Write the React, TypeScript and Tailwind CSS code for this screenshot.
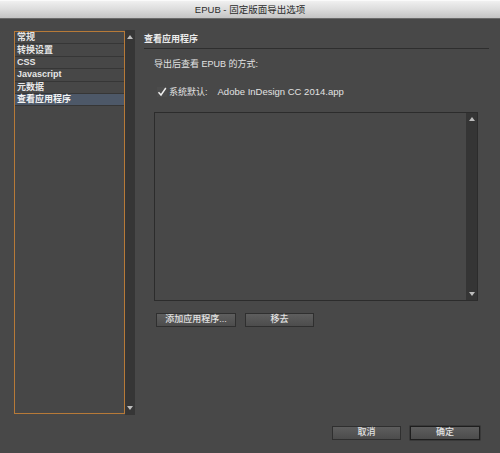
import React from "react";

const font = { fontFamily: '"Liberation Sans", "Noto Sans CJK SC", sans-serif' };

function UpArrow() {
  return (
    <svg width="6" height="4" viewBox="0 0 6 4">
      <path d="M0 4 L3 0 L6 4 Z" fill="#bdbdbd" />
    </svg>
  );
}
function DownArrow() {
  return (
    <svg width="6" height="4" viewBox="0 0 6 4">
      <path d="M0 0 L3 4 L6 0 Z" fill="#bdbdbd" />
    </svg>
  );
}

function Btn({ children, w, def }: { children: React.ReactNode; w: string; def?: boolean }) {
  return (
    <div
      className={`${w} h-[14px] flex items-center justify-center text-[9px] font-medium text-[#e2e2e2] bg-gradient-to-b from-[#5e5e5e] to-[#4c4c4c] ${
        def ? "border border-[#1e1e1e] shadow-[0_0_0_0.5px_#2a2a2a]" : "border border-[#2f2f2f]"
      }`}
    >
      {children}
    </div>
  );
}

const items = ["常规", "转换设置", "CSS", "Javascript", "元数据", "查看应用程序"];

export default function App() {
  return (
    <div className="w-[500px] h-[453px] bg-[#484848] flex flex-col overflow-hidden" style={font}>
      {/* Title bar */}
      <div className="h-[19px] shrink-0 bg-gradient-to-b from-[#f0f0f0] via-[#dcdcdc] to-[#c4c4c4] border-b border-[#6a6a6a] border-t border-t-[#fafafa] flex items-center justify-center">
        <span className="text-[9.5px] text-[#2c2c2c] leading-none">EPUB - 固定版面导出选项</span>
      </div>

      {/* Main */}
      <div className="flex pt-[12px] pl-[14px]">
        {/* Left list */}
        <div className="flex h-[383px]">
          <div className="w-[111px] h-full border border-[#b77a38] bg-[#474747] flex flex-col">
            {items.map((t, i) => (
              <div
                key={t}
                className={`h-[12.4px] shrink-0 border-b border-[#363636] flex items-center pl-[2px] text-[9px] font-semibold leading-none ${
                  i === items.length - 1 ? "bg-[#4d5868] text-[#f2f2f2]" : "text-[#e6e6e6]"
                }`}
              >
                {t}
              </div>
            ))}
          </div>
          <div className="w-[10px] h-[385px] -mt-[1px] bg-[#363636] flex flex-col items-center justify-between py-[5px]">
            <UpArrow />
            <DownArrow />
          </div>
        </div>

        {/* Right panel */}
        <div className="ml-[9px] flex flex-col">
          <div className="w-[345px] h-[18px] border-b border-[#2e2e2e] flex items-center text-[9px] font-semibold text-[#ececec] leading-none pb-[1px]">
            查看应用程序
          </div>
          <div className="pl-[10px] flex flex-col">
            <div className="mt-[11px] text-[9px] text-[#e2e2e2] leading-none">导出后查看 EPUB 的方式:</div>
            <div className="mt-[18px] flex items-center h-[10px] pl-[3px]">
              <svg width="10" height="10" viewBox="0 0 10 10">
                <rect x="0" y="0" width="10" height="10" fill="#4c4c4c" />
                <path d="M1.5 5.2 L4 8 L8.8 1" stroke="#f0f0f0" strokeWidth="1.4" fill="none" />
              </svg>
              <span className="ml-[2px] text-[9px] text-[#e2e2e2] leading-none">系统默认:</span>
              <span className="ml-[10px] text-[9.5px] text-[#e2e2e2] leading-none">Adobe InDesign CC 2014.app</span>
            </div>
            <div className="mt-[15px] w-[324px] h-[189px] border border-[#2c2c2c] bg-[#484848] flex justify-end">
              <div className="w-[11px] h-full bg-[#353535] flex flex-col items-center justify-between py-[4px]">
                <UpArrow />
                <DownArrow />
              </div>
            </div>
            <div className="mt-[12px] pl-[2px] flex gap-[9px]">
              <Btn w="w-[80px]">添加应用程序...</Btn>
              <Btn w="w-[69px]">移去</Btn>
            </div>
          </div>
        </div>
      </div>

      {/* Bottom buttons */}
      <div className="mt-[12px] flex justify-end pr-[20px] gap-[9px]">
        <Btn w="w-[69px]">取消</Btn>
        <Btn w="w-[70px]" def>
          确定
        </Btn>
      </div>
    </div>
  );
}
